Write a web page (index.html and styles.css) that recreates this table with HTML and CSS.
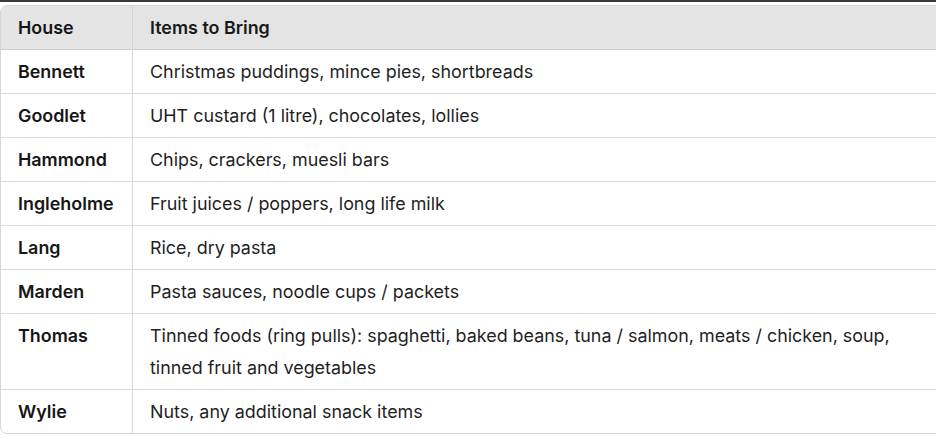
FILE: index.html
```html
<!DOCTYPE html>
<html>
<head>
<meta charset="utf-8">
<link rel="stylesheet" href="styles.css">
</head>
<body>
<div class="topbar"></div>
<div class="wrap">
  <table class="items">
    <thead>
      <tr><th class="house">House</th><th class="desc">Items to Bring</th></tr>
    </thead>
    <tbody>
      <tr><td class="house">Bennett</td><td class="desc">Christmas puddings, mince pies, shortbreads</td></tr>
      <tr><td class="house">Goodlet</td><td class="desc">UHT custard (1 litre), chocolates, lollies</td></tr>
      <tr><td class="house">Hammond</td><td class="desc">Chips, crackers, muesli bars</td></tr>
      <tr><td class="house">Ingleholme</td><td class="desc">Fruit juices / poppers, long life milk</td></tr>
      <tr><td class="house">Lang</td><td class="desc">Rice, dry pasta</td></tr>
      <tr><td class="house">Marden</td><td class="desc">Pasta sauces, noodle cups / packets</td></tr>
      <tr><td class="house">Thomas</td><td class="desc">Tinned foods (ring pulls): spaghetti, baked beans, tuna / salmon, meats / chicken, soup, tinned fruit and vegetables</td></tr>
      <tr><td class="house">Wylie</td><td class="desc">Nuts, any additional snack items</td></tr>
    </tbody>
  </table>
</div>
</body>
</html>
```
FILE: styles.css
```css
html, body {
  margin: 0;
  padding: 0;
  background: #ffffff;
  overflow: hidden;
}
body {
  font-family: Inter, "Noto Sans", sans-serif;
  font-size: 17.9px;
  color: #1f1f1f;
}
.topbar {
  height: 2px;
  background: #3a3a3a;
}
.wrap {
  padding-top: 3px;
  width: 950px;
}
.items {
  width: 950px;
  table-layout: fixed;
  border-collapse: separate;
  border-spacing: 0;
  border: 1px solid #d6d6d6;
  border-radius: 7px;
  overflow: hidden;
}
.items th,
.items td {
  text-align: left;
  vertical-align: top;
  padding: 6px 17px 5px 17px;
  line-height: 32px;
  border-bottom: 1px solid #dcdcdc;
}
.items tr:last-child td {
  border-bottom: none;
}
.items th {
  background: #e4e4e4;
  font-weight: 600;
  color: #1a1a1a;
  border-bottom: 1px solid #cfcfcf;
}
.items .house {
  width: 97px;
  border-right: 1px solid #d6d6d6;
  font-weight: 600;
  color: #161616;
}
.items .desc {
  font-weight: 400;
  padding-right: 30px;
}
.items th.desc {
  font-weight: 600;
}
```
